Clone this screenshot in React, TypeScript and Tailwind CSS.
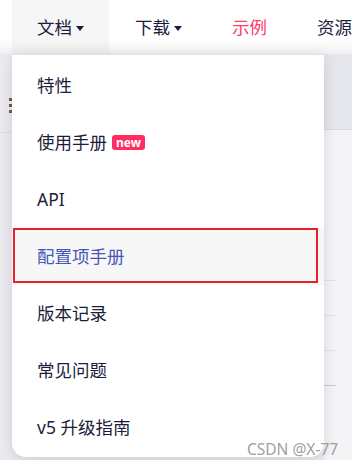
const items = ["特性", "使用手册", "API", "配置项手册", "版本记录", "常见问题", "v5 升级指南"];

function Caret() {
  return (
    <svg width="8" height="5" viewBox="0 0 8 5" className="ml-[4px] mt-[2px]">
      <path d="M0 0 L8 0 L4 5 Z" fill="#1b1d3a" />
    </svg>
  );
}

export default function App() {
  return (
    <div
      className="relative w-[352px] h-[460px] overflow-hidden bg-[#e9e9ef] text-[#1b1d3a]"
      style={{ fontFamily: '"Noto Sans", "Noto Sans CJK SC", sans-serif' }}
    >
      {/* top nav */}
      <div className="relative z-10 flex h-[54px] items-stretch whitespace-nowrap bg-gradient-to-b from-white from-70% to-[#f1f1f3] text-[17.5px]">
        <div className="ml-[12px] flex w-[97px] shrink-0 items-center bg-gradient-to-b from-[#f6f6f6] from-70% to-[#ececee] pl-[25px]">
          文档
          <Caret />
        </div>
        <div className="ml-[26px] flex shrink-0 items-center">
          下载
          <Caret />
        </div>
        <div className="ml-[50px] flex shrink-0 items-center text-[#ff3a6a]">示例</div>
        <div className="ml-[50px] flex shrink-0 items-center">资源</div>
      </div>

      {/* page content behind the menu */}
      <div className="flex h-[406px]">
        <div className="relative w-[12px] bg-[#ebebf0]">
          <div className="absolute left-[9px] top-[44px] flex flex-col gap-[3px]">
            <span className="h-[3px] w-[3px] bg-[#7a5a44]" />
            <span className="h-[3px] w-[3px] bg-[#7a5a44]" />
            <span className="h-[3px] w-[3px] bg-[#7a5a44]" />
          </div>
          <div className="absolute top-[78px] h-px w-full bg-[#dcdce2]" />
        </div>
        <div className="flex-1" />
        <div className="flex w-[28px] flex-col">
          <div className="h-[75px] bg-[#e6e6ed]" />
          <div className="h-px bg-[#d9d9e0]" />
          <div className="flex-1 bg-[#f4f4f7]">
            <div className="mt-[150px] h-px w-[12px] bg-[#e2e2e7]" />
            <div className="mt-[34px] h-px w-[12px] bg-[#e2e2e7]" />
            <div className="mt-[34px] h-px w-[12px] bg-[#e2e2e7]" />
            <div className="mt-[34px] h-px w-[12px] bg-[#c9c9cf]" />
          </div>
        </div>
      </div>

      {/* dropdown menu */}
      <div className="absolute left-[12px] top-[55px] z-20 w-[312px] rounded-b-[14px] bg-white pt-[2px] pb-[1px] shadow-[0_2px_14px_rgba(30,30,60,0.14)]">
        {items.map((label, i) => (
          <div
            key={label}
            className={
              "flex h-[57px] items-center pl-[25px] text-[17.5px] " +
              (i === 3 ? "bg-[#f7f7f8] text-[#4658b8]" : "")
            }
          >
            {label}
            {i === 1 && (
              <span className="ml-[5px] rounded-[3px] bg-[#ff2d60] px-[4px] text-[12px] font-bold leading-[15px] text-white">
                new
              </span>
            )}
          </div>
        ))}
      </div>

      {/* annotation box */}
      <div className="absolute left-[13px] top-[228px] z-30 h-[55px] w-[305px] border-2 border-[#e8202a]" />

      {/* watermark */}
      <div className="absolute left-[247px] top-[440px] z-30 whitespace-nowrap text-[15.5px] leading-[18px] text-[#a0a0a0]">
        CSDN @X-77
      </div>
    </div>
  );
}
